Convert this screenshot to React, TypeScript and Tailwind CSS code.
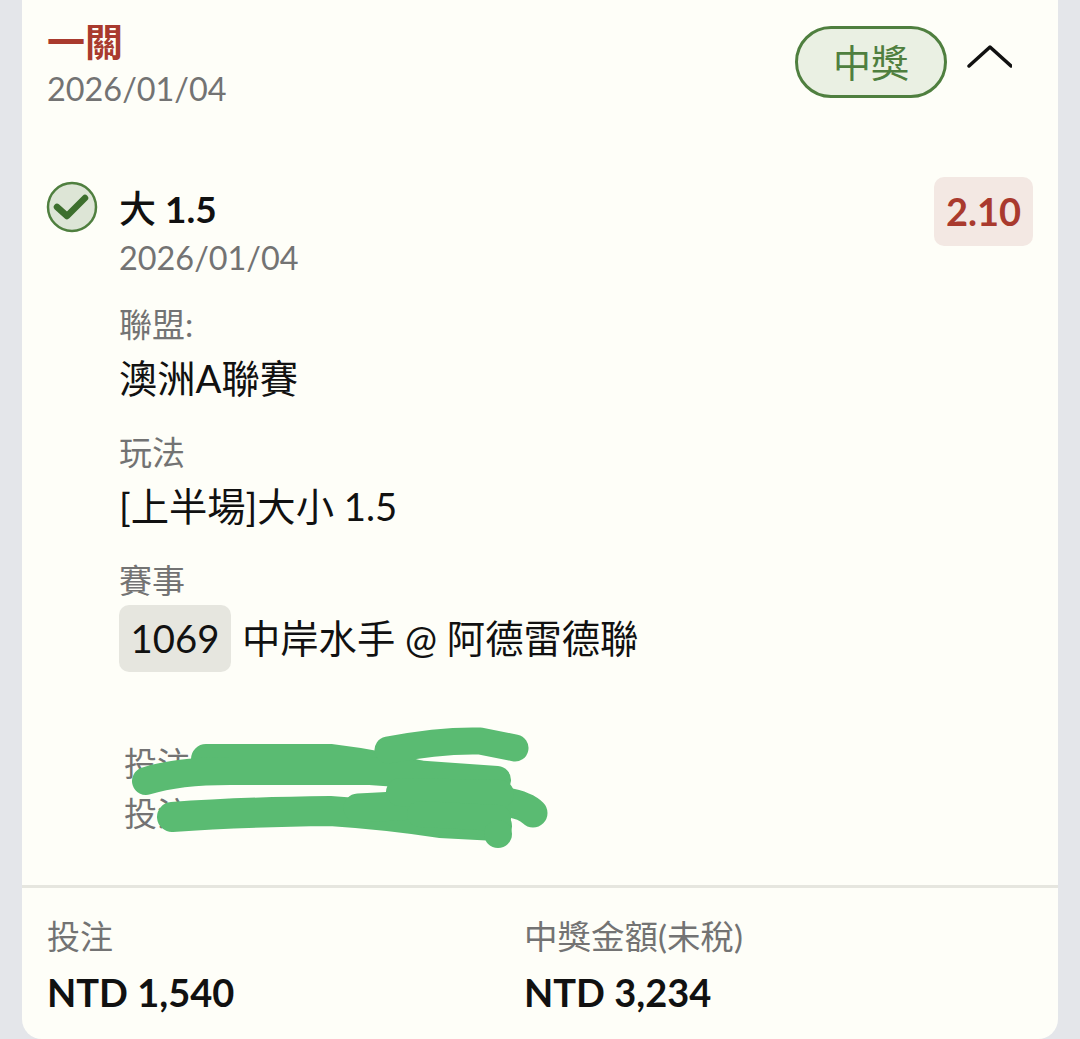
import React from "react";

const font = { fontFamily: '"Lato", "Noto Sans CJK TC", sans-serif' };

function Field({ label, value }: { label: string; value: React.ReactNode }) {
  return (
    <div className="flex flex-col">
      <div className="text-[33px] leading-[48px] text-[#737373]">{label}</div>
      <div className="text-[38.3px] leading-[60px] text-[#111111]">{value}</div>
    </div>
  );
}

export default function App() {
  return (
    <div style={font} className="relative w-[1080px] h-[1039px] overflow-hidden bg-[#e4e6ea] px-[22px]">
      <div className="flex flex-col h-[1039px] bg-[#fefef8] rounded-b-[20px]">
        <div className="flex justify-between pt-[21px] pl-[25px] pr-[46px]">
          <div className="flex flex-col">
            <div className="text-[38px] leading-[40px] font-bold text-[#a93a2e]">一關</div>
            <div className="mt-[3px] text-[32.4px] leading-[50px] text-[#737373]">2026/01/04</div>
          </div>
          <div className="flex items-start gap-[19px] pt-[5px]">
            <div className="flex items-center justify-center w-[152px] h-[72px] rounded-full border-[3px] border-[#4f7f3f] bg-[#eaf0e3] text-[38px] text-[#4f7f3f]">
              中獎
            </div>
            <svg width="46" height="28" viewBox="0 0 46 28" className="mt-[18px]" fill="none">
              <path d="M3 22 L24 3 L45 22" stroke="#111" strokeWidth="3.5" strokeLinecap="round" strokeLinejoin="round" />
            </svg>
          </div>
        </div>

        <div className="flex justify-between pt-[70px] pl-[24px] pr-[25px]">
          <div className="flex gap-[21px]">
            <svg width="52" height="52" viewBox="0 0 52 52" className="-mt-[3px] shrink-0" fill="none">
              <circle cx="26" cy="26" r="24" fill="#dde5d6" stroke="#4f7f3f" strokeWidth="2.5" />
              <path d="M11 26 L21 35 L39 17" stroke="#3d6f2e" strokeWidth="6.5" strokeLinecap="round" strokeLinejoin="round" />
            </svg>
            <div className="flex flex-col">
              <div className="text-[37px] leading-[50px] font-bold text-[#111111]">
                <span className="font-medium">大</span> 1.5
              </div>
              <div className="text-[32.4px] leading-[48px] text-[#737373]">2026/01/04</div>
              <div className="flex flex-col gap-[20px] pt-[18px]">
                <Field label="聯盟:" value="澳洲A聯賽" />
                <Field label="玩法" value="[上半場]大小 1.5" />
                <div className="flex flex-col">
                  <div className="text-[33px] leading-[48px] text-[#737373]">賽事</div>
                  <div className="mt-[1px] flex items-center gap-[11px] text-[38.3px] text-[#111111]">
                    <span className="flex items-center justify-center w-[112px] h-[67px] rounded-[10px] bg-[#e6e6df]">1069</span>
                    <span>中岸水手 @ 阿德雷德聯</span>
                  </div>
                </div>
              </div>
              <div className="flex flex-col pt-[66px] pl-[5px] text-[33px] leading-[50px] text-[#737373]">
                <div>投注</div>
                <div>投注</div>
              </div>
            </div>
          </div>
          <div className="flex items-center justify-center w-[99px] h-[69px] -mt-[7px] rounded-[10px] bg-[#f3e8e3] text-[38px] font-bold text-[#a93a2e]">
            2.10
          </div>
        </div>

        <div className="mt-auto border-t-[3px] border-[#e6e6df] grid grid-cols-[477px_1fr] pt-[25px] pb-[22px] pl-[25px]">
          <div className="flex flex-col gap-[8px]">
            <div className="text-[33px] leading-[46px] text-[#737373]">投注</div>
            <div className="text-[38px] leading-[50px] font-bold text-[#111111]">NTD 1,540</div>
          </div>
          <div className="flex flex-col gap-[8px]">
            <div className="text-[33.5px] leading-[46px] text-[#737373]">中獎金額(未稅)</div>
            <div className="text-[38px] leading-[50px] font-bold text-[#111111]">NTD 3,234</div>
          </div>
        </div>
      </div>

      <svg className="absolute left-0 top-0" width="1080" height="1039" viewBox="0 0 1080 1039" fill="none">
        <g stroke="#5abb72" strokeLinecap="round" strokeLinejoin="round">
          <path strokeWidth="30" d="M206 759 L330 759 Q380 765 430 778" />
          <path strokeWidth="28" d="M146 781 Q180 770 240 771 L370 771 L497 780" />
          <path strokeWidth="27" d="M388 750 Q440 740 480 741 L515 748" />
          <path strokeWidth="30" d="M172 817 Q240 812 330 811 Q390 815 440 823 L497 826" />
          <path strokeWidth="29" d="M358 808 Q420 805 450 802 L505 802 Q525 805 533 813" />
          <path strokeWidth="28" d="M400 792 L500 794" />
          <path strokeWidth="26" d="M420 814 L498 818" />
          <circle cx="498" cy="834" r="14" fill="#5abb72" stroke="none" />
        </g>
      </svg>
    </div>
  );
}
